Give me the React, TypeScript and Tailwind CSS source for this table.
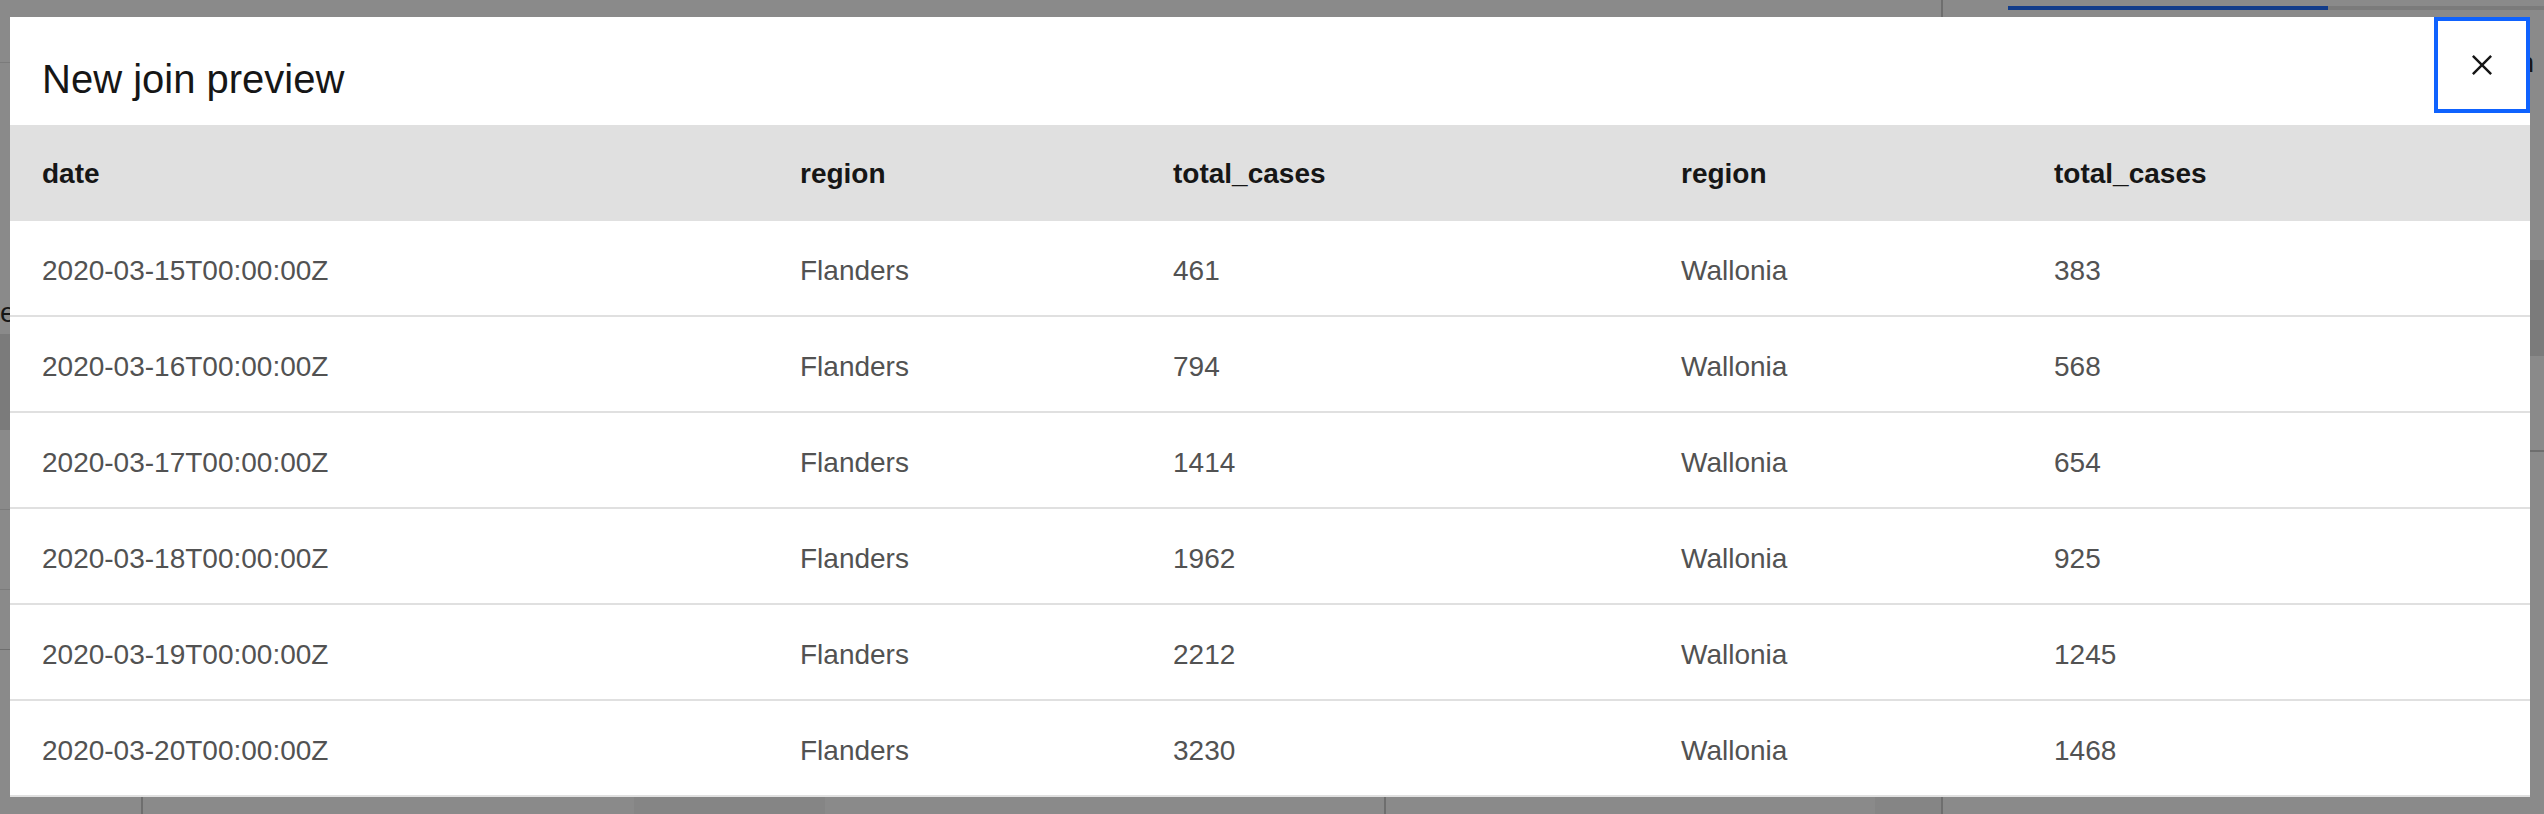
import React from 'react';

const rows = [
  ['2020-03-15T00:00:00Z', 'Flanders', '461', 'Wallonia', '383'],
  ['2020-03-16T00:00:00Z', 'Flanders', '794', 'Wallonia', '568'],
  ['2020-03-17T00:00:00Z', 'Flanders', '1414', 'Wallonia', '654'],
  ['2020-03-18T00:00:00Z', 'Flanders', '1962', 'Wallonia', '925'],
  ['2020-03-19T00:00:00Z', 'Flanders', '2212', 'Wallonia', '1245'],
  ['2020-03-20T00:00:00Z', 'Flanders', '3230', 'Wallonia', '1468'],
];

const headers = ['date', 'region', 'total_cases', 'region', 'total_cases'];

const cols = 'grid grid-cols-[758px_373px_508px_373px_508px] items-center';

const App: React.FC = () => {
  return (
    <div className="relative h-[814px] w-full overflow-hidden bg-white font-['Liberation_Sans',Arial,sans-serif]">
      {/* page underneath the overlay */}
      <div className="flex h-full">
        <div className="flex flex-1 flex-col">
          <div className="h-[63px] border-b border-[#e0e0e0]" />
          <div className="flex h-[271px] flex-col justify-end text-[28px] text-[#161616]">
            <span>e</span>
          </div>
          <div className="h-[96px] bg-[#e0e0e0]" />
          <div className="h-[80px] border-b border-[#e0e0e0]" />
          <div className="h-[80px] border-b border-[#e0e0e0]" />
          <div className="h-[60px] border-b border-[#c6c6c6]" />
          <div className="flex flex-1">
            <div className="w-[143px] border-r-2 border-[#c6c6c6]" />
            <div className="w-[491px]" />
            <div className="w-[191px] bg-[#f4f4f4]" />
            <div className="w-[561px] border-r-2 border-[#c6c6c6]" />
            <div className="w-[489px]" />
            <div className="flex-1 bg-[#f4f4f4]" />
          </div>
        </div>
        <div className="flex w-[603px] flex-col border-l-2 border-[#c6c6c6]">
          <div className="flex pt-[6px] pl-[65px]">
            <div className="h-[4px] w-[320px] bg-[#0f62fe]" />
            <div className="h-[4px] flex-1 bg-[#e0e0e0]" />
          </div>
          <div className="pl-[560px] pt-[30px] text-[28px] leading-[46px] text-[#161616]">
            <p>an</p>
            <p>ol</p>
            <p>y</p>
            <p>e</p>
          </div>
          <div className="mt-[36px] flex h-[96px] items-center bg-[#e0e0e0] pl-[560px] text-[28px] font-bold text-[#161616]">
            w
          </div>
          <div className="h-[96px] border-b-2 border-[#c6c6c6] pl-[560px] pt-[24px] text-[28px] text-[#525252]">
            e
          </div>
        </div>
      </div>

      {/* overlay */}
      <div className="absolute inset-0 bg-[rgba(22,22,22,0.5)]" />

      {/* modal */}
      <div className="absolute left-[10px] top-[17px] w-[2520px] bg-white">
        <div className="h-[108px] pl-[32px] pt-[34px]">
          <h2 className="text-[40px] leading-[56px] text-[#161616]">New join preview</h2>
        </div>
        <button className="absolute right-0 top-0 flex h-[96px] w-[96px] items-center justify-center border-4 border-[#0f62fe] bg-white">
          <svg width="40" height="40" viewBox="0 0 32 32" fill="#161616">
            <path d="M24 9.4L22.6 8 16 14.6 9.4 8 8 9.4 14.6 16 8 22.6 9.4 24 16 17.4 22.6 24 24 22.6 17.4 16 24 9.4z" />
          </svg>
        </button>

        <div className={`${cols} h-[96px] bg-[#e0e0e0] pt-[2px] text-[28px] font-bold text-[#161616]`}>
          {headers.map((h, i) => (
            <div key={i} className="px-[32px]">{h}</div>
          ))}
        </div>
        {rows.map((r, idx) => (
          <div key={idx} className={`${cols} h-[96px] border-b-2 border-[#e0e0e0] pt-[6px] text-[28px] text-[#525252]`}>
            {r.map((c, i) => (
              <div key={i} className="px-[32px]">{c}</div>
            ))}
          </div>
        ))}
      </div>
    </div>
  );
};

export default App;
